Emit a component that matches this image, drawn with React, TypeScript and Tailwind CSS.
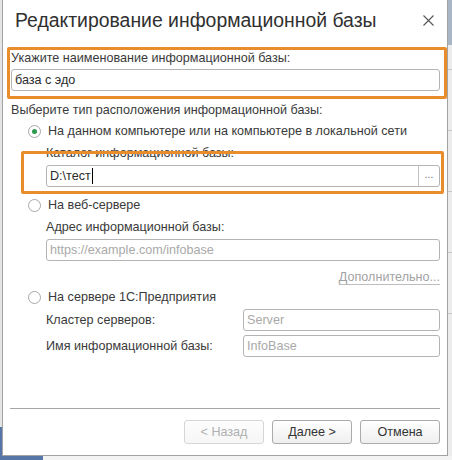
import React from "react";

function Radio({ checked, label }: { checked?: boolean; label: string }) {
  return (
    <div className="flex h-[16px] items-center">
      <span className="ml-[17px] flex h-[13px] w-[13px] items-center justify-center rounded-full border border-[#a8a8a8] bg-white">
        {checked && <span className="h-[5px] w-[5px] rounded-full bg-[#2e9a4c]" />}
      </span>
      <span className="ml-[7px]">{label}</span>
    </div>
  );
}

function Field({ value, placeholder, className = "", button = false, caret = false }: {
  value?: string;
  placeholder?: string;
  className?: string;
  button?: boolean;
  caret?: boolean;
}) {
  return (
    <div className={`flex h-[22px] items-stretch rounded-[3px] border border-[#b4b4b4] bg-white ${className}`}>
      <div className="flex flex-1 items-center pl-[3px]">
        {value ? (
          <span className="flex items-center text-[#2b2b2b]">
            {value}
            {caret && <span className="ml-[1px] h-[16px] w-[1px] bg-black" />}
          </span>
        ) : (
          <span className="text-[#a9a9a9]">{placeholder}</span>
        )}
      </div>
      {button && (
        <div className="flex w-[21px] items-center justify-center border-l border-[#c4c4c4] pb-[3px] text-[10px] text-[#666]">
          ...
        </div>
      )}
    </div>
  );
}

function Mark({ className }: { className: string }) {
  return (
    <div className={`pointer-events-none absolute rounded-[2px] border-[3px] border-[#e98d2c] ${className}`} />
  );
}

function Button({ label, disabled }: { label: string; disabled?: boolean }) {
  return (
    <div
      className={`flex h-[24px] w-[80px] items-center justify-center rounded-[3px] border bg-gradient-to-b ${
        disabled
          ? "border-[#d6d6d6] from-[#fdfdfd] to-[#f6f6f6] text-[#b0b0b0]"
          : "border-[#ababab] from-[#ffffff] to-[#efefef] text-[#333]"
      }`}
    >
      {label}
    </div>
  );
}

export default function App() {
  return (
    <div className="flex h-[460px] w-[452px] flex-col overflow-hidden bg-[#f3f3f3] font-['Liberation_Sans',Arial,sans-serif] text-[12.6px] leading-[16px] text-[#3a3a3a]">
      <div className="flex h-[456px]">
        {/* window behind, left */}
        <div className="flex w-[2px] flex-col bg-[#e4e4e4]">
          <div className="mt-auto h-[29px] bg-[#5776a8]" />
        </div>

        {/* dialog */}
        <div className="flex w-[446px] flex-col border-x border-b border-[#a2a2a2] bg-white">
          <div className="flex h-[40px] items-center pl-[12px] pr-[13px]">
            <span className="text-[19.4px] leading-[24px] text-[#303030]">Редактирование информационной базы</span>
            <svg className="ml-auto" width="11" height="11" viewBox="0 0 11 11">
              <path d="M0.5 0.5 L10.5 10.5 M10.5 0.5 L0.5 10.5" stroke="#555" strokeWidth="1.1" />
            </svg>
          </div>

          <div className="flex flex-1 flex-col pl-[8px] pr-[7px]">
            <div className="relative">
              <div className="pt-[10px]">Укажите наименование информационной базы:</div>
              <Field value="база с эдо" className="mt-[3px]" />
              <Mark className="-left-[4px] -right-[7px] top-[7px] -bottom-[8px]" />
            </div>

            <div className="mt-[11px]">Выберите тип расположения информационной базы:</div>
            <div className="mt-[5px]">
              <Radio checked label="На данном компьютере или на компьютере в локальной сети" />
            </div>

            <div className="relative ml-[35px] pt-[6px]">
              <div>Каталог информационной базы:</div>
              <Field value="D:\тест" button caret className="mt-[4px]" />
              <Mark className="-left-[25px] -right-[4px] top-[12px] -bottom-[7px]" />
            </div>

            <div className="mt-[10px]">
              <Radio label="На веб-сервере" />
            </div>
            <div className="ml-[35px]">
              <div className="mt-[6px]">Адрес информационной базы:</div>
              <Field placeholder="https://example.com/infobase" className="mt-[4px]" />
              <div className="mt-[8px] flex justify-end">
                <span className="text-[#a2a2a2] underline decoration-[#bdbdbd] underline-offset-[3px]">Дополнительно...</span>
              </div>
            </div>

            <div className="mt-[4px]">
              <Radio label="На сервере 1С:Предприятия" />
            </div>
            <div className="ml-[35px] flex flex-col gap-[4px] pt-[4px]">
              <div className="flex items-center">
                <span className="w-[197px]">Кластер серверов:</span>
                <Field placeholder="Server" className="flex-1" />
              </div>
              <div className="flex items-center">
                <span className="w-[197px]">Имя информационной базы:</span>
                <Field placeholder="InfoBase" className="flex-1" />
              </div>
            </div>

            <div className="mt-auto pb-[11px]">
              <div className="ml-[-1px] h-[1px] bg-[#a6a6a6]" />
              <div className="mt-[11px] flex justify-end gap-[8px]">
                <Button label="< Назад" disabled />
                <Button label="Далее >" />
                <Button label="Отмена" />
              </div>
            </div>
          </div>
        </div>

        {/* window behind, right */}
        <div className="flex w-[4px] flex-col bg-[#ececec]">
          <div className="h-[45px] bg-[#a9b6c6]" />
          <div className="mt-[24px] h-[1px] bg-[#c8c8c8]" />
          <div className="mt-[60px] h-[1px] bg-[#c8c8c8]" />
          <div className="mt-[60px] h-[1px] bg-[#c8c8c8]" />
          <div className="mt-[60px] h-[1px] bg-[#c8c8c8]" />
          <div className="mt-[60px] h-[1px] bg-[#c8c8c8]" />
        </div>
      </div>
      <div className="flex h-[4px]">
        <div className="w-[43px] bg-[#5776a8]" />
      </div>
    </div>
  );
}
